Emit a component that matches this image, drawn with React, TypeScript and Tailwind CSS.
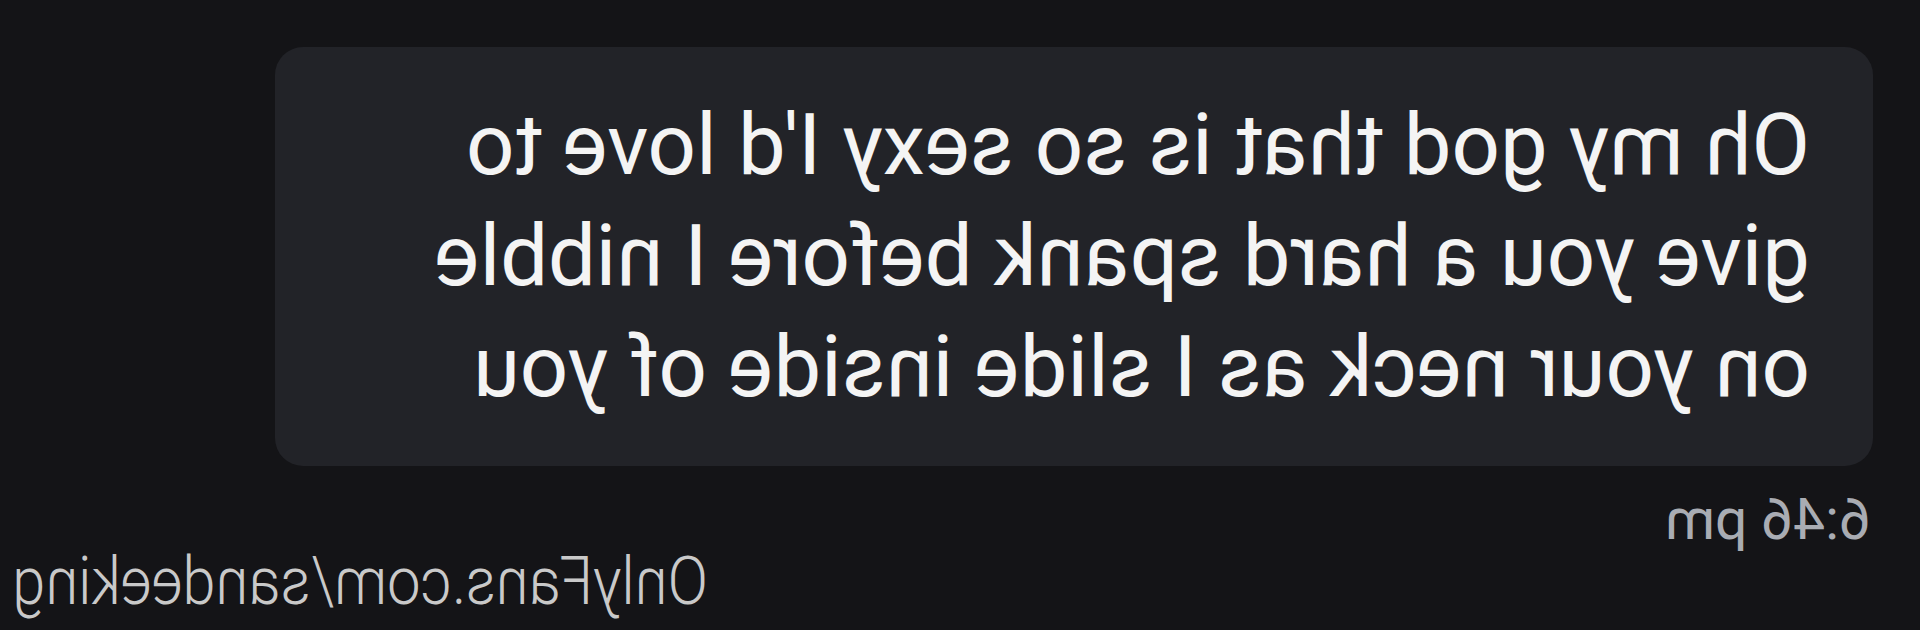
import React from "react";

export default function App() {
  const lines = [
    "Oh my god that is so sexy I'd love to",
    "give you a hard spank before I nibble",
    "on your neck as I slide inside of you",
  ];
  return (
    <div className="w-[1920px] h-[630px] overflow-hidden bg-[#141417]">
      <div
        className="w-full h-full scale-x-[-1] flex flex-col pt-[47px] pl-[47px] pr-[12px]"
        style={{ fontFamily: "Roboto, 'Liberation Sans', sans-serif" }}
      >
        <div className="w-[1598px] h-[419px] rounded-[28px] bg-[#222328] pl-[63px] pt-[43px]">
          {lines.map((l) => (
            <div
              key={l}
              className="text-[85px] leading-[111px] text-[#f4f4f4] whitespace-nowrap"
            >
              {l}
            </div>
          ))}
        </div>
        <div className="mt-[25px] pl-[2px] text-[57px] leading-[57px] text-[#a9acb3]">
          6:46 pm
        </div>
        <div className="flex justify-end mt-[0px]">
          <div className="text-[67px] leading-[67px] font-light text-[#c9c9c9] scale-x-[0.89] origin-right whitespace-nowrap">
            OnlyFans.com/sandeeking
          </div>
        </div>
      </div>
    </div>
  );
}
